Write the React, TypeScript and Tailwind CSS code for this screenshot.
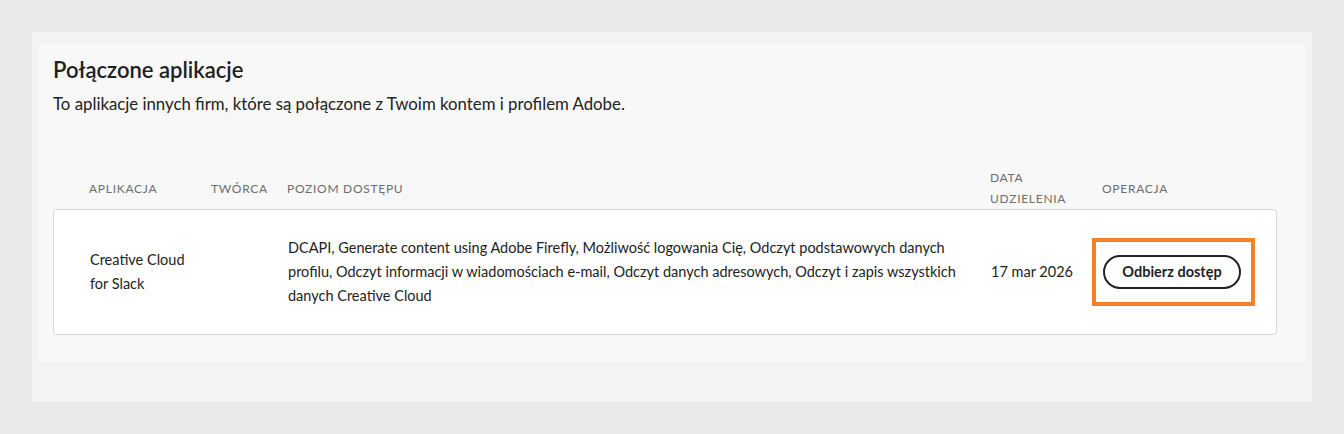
export default function App() {
  const cols = "grid grid-cols-[122px_76px_703px_112px_1fr] items-center pl-[36px]";
  return (
    <div className="min-h-[434px] bg-[#e9e9e9] pt-[32px] px-[32px] pb-[32px] font-['Lato','Noto_Sans',sans-serif] text-[#222222]">
      <div className="bg-[#f3f3f3] px-[6px] pt-[12px] pb-[40px]">
        <div className="bg-[#f8f8f8] pl-[15px] pr-[29px] pt-[12px] pb-[27px]">
          <h2 className="text-[22px] font-semibold leading-[28px] text-[#1f1f1f]">Połączone aplikacje</h2>
          <p className="mt-[9px] text-[16.8px] leading-[22px] text-[#222222]">
            To aplikacje innych firm, które są połączone z Twoim kontem i profilem Adobe.
          </p>

          <div className={`${cols} mt-[52px] text-[12px] uppercase tracking-[0.06em] text-[#6e6e6e] leading-[21px]`}>
            <span>Aplikacja</span>
            <span>Twórca</span>
            <span>Poziom dostępu</span>
            <span>
              Data
              <br />
              Udzielenia
            </span>
            <span>Operacja</span>
          </div>

          <div className={`${cols} h-[126px] bg-white border border-[#d6d6d6] rounded-[4px] text-[14.5px] leading-[24px]`}>
            <span>
              Creative Cloud
              <br />
              for Slack
            </span>
            <span></span>
            <span className="pr-[20px]">
              DCAPI, Generate content using Adobe Firefly, Możliwość logowania Cię, Odczyt podstawowych danych profilu,
              Odczyt informacji w wiadomościach e-mail, Odczyt danych adresowych, Odczyt i zapis wszystkich danych
              Creative Cloud
            </span>
            <span>17 mar 2026</span>
            <div className="-ml-[11px]">
              <div className="inline-flex border-[4px] border-[#f5822a] pl-[7px] pr-[10px] py-[13px]">
                <button className="h-[34px] w-[138px] rounded-full border-2 border-[#242424] text-[14.5px] font-bold text-[#1f1f1f] leading-none">
                  Odbierz dostęp
                </button>
              </div>
            </div>
          </div>
        </div>
      </div>
    </div>
  );
}
